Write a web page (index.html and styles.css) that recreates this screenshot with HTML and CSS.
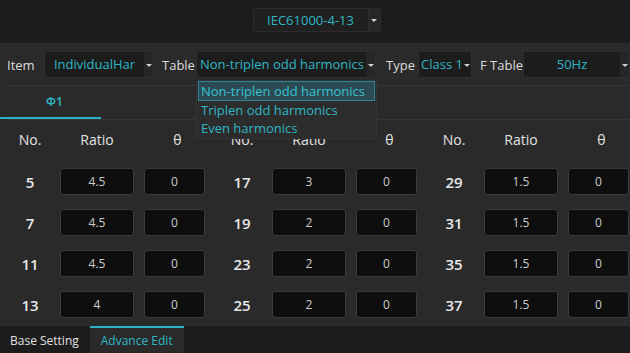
FILE: index.html
```html
<!DOCTYPE html>
<html lang="en">
<head>
  <meta charset="UTF-8">
  <title>Advance Edit</title>
  <link rel="stylesheet" href="styles.css">
</head>
<body>

  <div class="topbar">
    <div class="combo">
      <span class="val">IEC61000-4-13</span>
      <span class="arr"></span>
    </div>
  </div>

  <div class="panel">
    <div class="filters">
      <span class="lbl lbl-item">Item</span>
      <div class="sel sel-item"><span class="val">IndividualHar</span><span class="arr"></span></div>
      <span class="lbl lbl-table">Table</span>
      <div class="sel sel-table"><span class="val">Non-triplen odd harmonics</span><span class="arr"></span></div>
      <span class="lbl lbl-type">Type</span>
      <div class="sel sel-type"><span class="val">Class 1</span><span class="arr"></span></div>
      <span class="lbl lbl-ftable">F Table</span>
      <div class="sel sel-ftable"><span class="val">50Hz</span><span class="arr"></span></div>
    </div>

    <div class="droplist">
      <div class="opt active">Non-triplen odd harmonics</div>
      <div class="opt">Triplen odd harmonics</div>
      <div class="opt">Even harmonics</div>
    </div>

    <div class="phases">
      <div class="phase current">Φ1</div>
    </div>

    <div class="grid">
      <div class="head">No.</div><div class="head">Ratio</div><div class="head">θ</div>
      <div class="head">No.</div><div class="head">Ratio</div><div class="head">θ</div>
      <div class="head">No.</div><div class="head">Ratio</div><div class="head">θ</div>

      <div class="no">5</div><div class="box ratio">4.5</div><div class="box theta">0</div>
      <div class="no">17</div><div class="box ratio">3</div><div class="box theta">0</div>
      <div class="no">29</div><div class="box ratio">1.5</div><div class="box theta">0</div>

      <div class="no">7</div><div class="box ratio">4.5</div><div class="box theta">0</div>
      <div class="no">19</div><div class="box ratio">2</div><div class="box theta">0</div>
      <div class="no">31</div><div class="box ratio">1.5</div><div class="box theta">0</div>

      <div class="no">11</div><div class="box ratio">4.5</div><div class="box theta">0</div>
      <div class="no">23</div><div class="box ratio">2</div><div class="box theta">0</div>
      <div class="no">35</div><div class="box ratio">1.5</div><div class="box theta">0</div>

      <div class="no">13</div><div class="box ratio">4</div><div class="box theta">0</div>
      <div class="no">25</div><div class="box ratio">2</div><div class="box theta">0</div>
      <div class="no">37</div><div class="box ratio">1.5</div><div class="box theta">0</div>
    </div>
  </div>

  <div class="bottombar">
    <div class="btab">Base Setting</div>
    <div class="btab current">Advance Edit</div>
  </div>

</body>
</html>
```

FILE: styles.css
```css
body {
  margin: 0;
  width: 630px;
  height: 353px;
  overflow: hidden;
  background-color: #1c1c1c;
  font-family: 'Open Sans', 'Noto Sans', sans-serif;
  color: #e4e4e4;
}

.topbar {
  height: 43px;
  display: flex;
  justify-content: center;
  align-items: flex-start;
  background-color: #1c1c1c;
}

.combo {
  margin-top: 8px;
  margin-left: 3px;
  width: 128px;
  height: 24px;
  display: flex;
  box-sizing: border-box;
  background-color: #202020;
  border: 1px solid #2c2c2c;
  border-radius: 2px;
}

.combo .val {
  flex: 1;
  text-align: center;
  line-height: 22px;
  font-size: 13px;
  color: #2fb7c6;
}

.combo .arr {
  width: 11px;
  border-left: 1px solid #2c2c2c;
  background-color: #262626;
}

.arr {
  position: relative;
}

.arr::after {
  content: '';
  position: absolute;
  top: 50%;
  left: 50%;
  margin: -1px 0 0 -3px;
  border-left: 3px solid transparent;
  border-right: 3px solid transparent;
  border-top: 3px solid #cfcfcf;
}

.panel {
  position: relative;
  height: 283px;
  background-color: #2a2a2a;
  padding-top: 8px;
  box-sizing: border-box;
}

.filters {
  display: flex;
  align-items: center;
  height: 27px;
  padding-left: 7px;
  font-size: 13px;
}

.lbl {
  color: #dcdcdc;
  white-space: nowrap;
}

.lbl-item { width: 37px; }
.lbl-table { width: 34px; margin-left: 8px; }
.lbl-type { width: 32px; margin-left: 10px; }
.lbl-ftable { width: 43px; margin-left: 8px; }

.sel {
  position: relative;
  height: 27px;
  display: flex;
  box-sizing: border-box;
  background-color: #1c1c1c;
  border: 1px solid #2f2f2f;
  border-radius: 2px;
}

.sel .val {
  flex: 1;
  overflow: hidden;
  white-space: nowrap;
  text-align: center;
  line-height: 25px;
  color: #2fb7c6;
}

.sel .arr {
  width: 9px;
  background-color: #262626;
}

.sel-item { width: 110px; }
.sel-table { width: 180px; }
.sel-table .val { text-align: left; padding-left: 3px; }
.sel-type { width: 54px; }
.sel-type .val { text-align: left; padding-left: 2px; overflow: visible; }
.sel-type .arr { position: absolute; right: 0; top: 0; bottom: 0; background: none; }
.sel-ftable { width: 107px; }

.droplist {
  position: absolute;
  top: 37px;
  left: 196px;
  width: 181px;
  padding: 0 1px 1px;
  box-sizing: border-box;
  background-color: #2c2c2c;
  border: 1px solid #333;
  z-index: 2;
  font-size: 13px;
}

.opt {
  height: 18px;
  line-height: 18px;
  padding-left: 3px;
  color: #2fb7c6;
  white-space: nowrap;
}

.opt.active {
  background-color: #2c4a53;
  border: 1px solid #2a8596;
  padding-left: 2px;
  height: 18px;
  line-height: 18px;
  color: #38c2d2;
}

.phases {
  margin: 7px 0 0 8px;
  border-top: 1px solid #363636;
  border-bottom: 1px solid #363636;
  height: 33px;
  display: flex;
}

.phase {
  width: 93px;
  margin-left: -8px;
  padding-left: 8px;
  box-sizing: content-box;
  text-align: center;
  line-height: 31px;
  font-size: 12px;
  font-weight: 600;
  color: #2fb7c6;
}

.phase.current {
  border-bottom: 2px solid #28b2c2;
}

.grid {
  margin-top: 5px;
  display: grid;
  grid-template-columns: repeat(3, 60px 84px 68px);
  grid-template-rows: 29px repeat(4, 27px);
  row-gap: 14px;
  align-items: center;
  font-size: 14px;
}

.head {
  text-align: center;
  color: #e4e4e4;
}

.head:nth-child(3n+2) { width: 74px; }
.head:nth-child(3n) { width: 61px; padding-left: 3px; }

.no {
  text-align: center;
  font-size: 15px;
  font-weight: 600;
  color: #e8e8e8;
}

.box {
  height: 27px;
  box-sizing: border-box;
  background-color: #0e0e0e;
  border: 1px solid #3a3a3a;
  border-radius: 3px;
  text-align: center;
  line-height: 25px;
  font-size: 12px;
  color: #cdcdcd;
}

.box.ratio { width: 74px; }
.box.theta { width: 61px; }

.bottombar {
  height: 27px;
  display: flex;
  background-color: #1c1c1c;
  font-size: 12px;
}

.btab {
  padding: 0 10px;
  line-height: 25px;
  border-top: 2px solid transparent;
  color: #e0e0e0;
}

.btab.current {
  margin-left: 1px;
  padding: 0 11px;
  background-color: #2a2a2a;
  border-top-color: #28b2c2;
  color: #2fb7c6;
}
```
